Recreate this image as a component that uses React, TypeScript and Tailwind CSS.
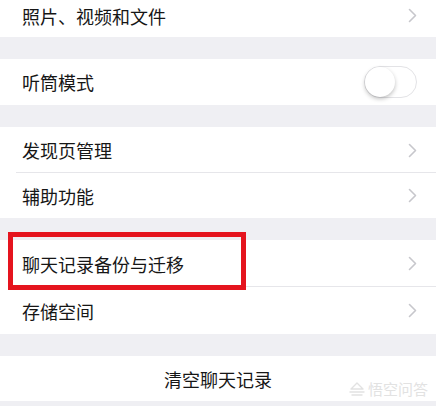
import React from 'react';

const font = { fontFamily: '"Noto Sans CJK SC", "Noto Sans", sans-serif' };

function Chevron() {
    return (
        <svg width="9" height="15" viewBox="0 0 9 15" fill="none" className="shrink-0">
            <path d="M1.5 1.5 L7.5 7.5 L1.5 13.5" stroke="#c7c7cc" strokeWidth="1.6" strokeLinecap="round" strokeLinejoin="round" />
        </svg>
    );
}

function Row({ label, height, divider }: { label: string; height: string; divider?: boolean }) {
    return (
        <div className={`relative flex items-center justify-between bg-white pl-[22px] pr-[19px] ${height}`}>
            <span className="text-[18px] leading-none text-[#161616]">{label}</span>
            <Chevron />
            {divider && <div className="absolute bottom-0 left-[16px] right-0 h-px bg-[#e6e6ea]" />}
        </div>
    );
}

function Gap() {
    return <div className="h-[22px] bg-[#efeff3]" />;
}

export default function App() {
    return (
        <div className="relative w-[436px] h-[406px] overflow-hidden bg-[#efeff3]" style={font}>
            <Row label="照片、视频和文件" height="h-[37px] pb-[6px]" />
            <Gap />
            <div className="flex h-[46px] items-center justify-between bg-white pl-[22px] pr-[19px]">
                <span className="text-[18px] leading-none text-[#161616]">听筒模式</span>
                <div className="relative h-[32px] w-[53px] rounded-full border border-[#e3e3e6] bg-white">
                    <div className="absolute left-0 top-0 h-[30px] w-[30px] rounded-full bg-white shadow-[0_2px_4px_rgba(0,0,0,0.25)]" />
                </div>
            </div>
            <Gap />
            <Row label="发现页管理" height="h-[46px]" divider />
            <Row label="辅助功能" height="h-[45px]" />
            <Gap />
            <Row label="聊天记录备份与迁移" height="h-[47px]" divider />
            <Row label="存储空间" height="h-[47px]" />
            <Gap />
            <div className="relative flex h-[45px] items-center justify-center bg-white">
                <span className="text-[18px] leading-none text-[#161616]">清空聊天记录</span>
                <div className="absolute right-[8px] bottom-[5px] flex items-center gap-[3px] text-[#e2e2e2]">
                    <svg width="16" height="14" viewBox="0 0 16 14" fill="none">
                        <path d="M8 1 L14 7 H2 Z" stroke="#e2e2e2" strokeWidth="1.4" strokeLinejoin="round" />
                        <path d="M1 10 H15 M3 13 H13" stroke="#e2e2e2" strokeWidth="1.4" strokeLinecap="round" />
                    </svg>
                    <span className="text-[15px] leading-none">悟空问答</span>
                </div>
            </div>
            <div className="pointer-events-none absolute left-[8px] top-[232px] h-[58px] w-[238px] border-[5px] border-[#e5141e]" />
        </div>
    );
}
